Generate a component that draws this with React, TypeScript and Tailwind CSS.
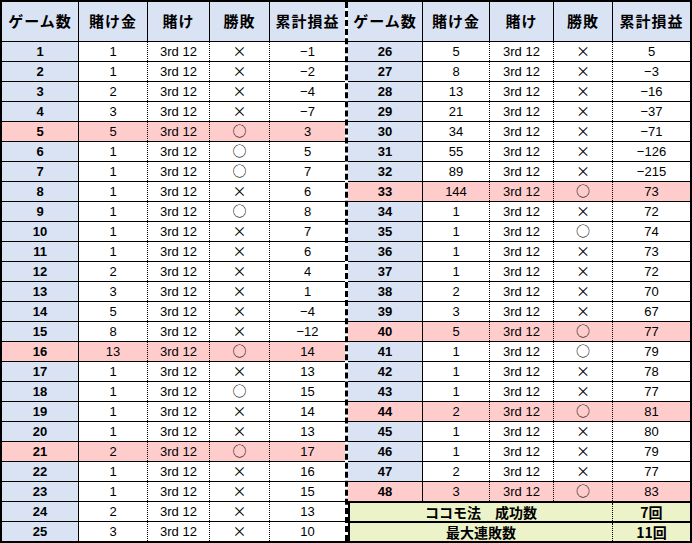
import React from "react";

type Row = [number, number, boolean, string];

const left: Row[] = [
  [1, 1, false, "−1"],
  [2, 1, false, "−2"],
  [3, 2, false, "−4"],
  [4, 3, false, "−7"],
  [5, 5, true, "3"],
  [6, 1, true, "5"],
  [7, 1, true, "7"],
  [8, 1, false, "6"],
  [9, 1, true, "8"],
  [10, 1, false, "7"],
  [11, 1, false, "6"],
  [12, 2, false, "4"],
  [13, 3, false, "1"],
  [14, 5, false, "−4"],
  [15, 8, false, "−12"],
  [16, 13, true, "14"],
  [17, 1, false, "13"],
  [18, 1, true, "15"],
  [19, 1, false, "14"],
  [20, 1, false, "13"],
  [21, 2, true, "17"],
  [22, 1, false, "16"],
  [23, 1, false, "15"],
  [24, 2, false, "13"],
  [25, 3, false, "10"],
];

const right: Row[] = [
  [26, 5, false, "5"],
  [27, 8, false, "−3"],
  [28, 13, false, "−16"],
  [29, 21, false, "−37"],
  [30, 34, false, "−71"],
  [31, 55, false, "−126"],
  [32, 89, false, "−215"],
  [33, 144, true, "73"],
  [34, 1, false, "72"],
  [35, 1, true, "74"],
  [36, 1, false, "73"],
  [37, 1, false, "72"],
  [38, 2, false, "70"],
  [39, 3, false, "67"],
  [40, 5, true, "77"],
  [41, 1, true, "79"],
  [42, 1, false, "78"],
  [43, 1, false, "77"],
  [44, 2, true, "81"],
  [45, 1, false, "80"],
  [46, 1, false, "79"],
  [47, 2, false, "77"],
  [48, 3, true, "83"],
];

const pinkLeft = new Set([5, 16, 21]);
const pinkRight = new Set([33, 40, 44, 48]);

const headers = ["ゲーム数", "賭け金", "賭け", "勝敗", "累計損益"];

const JP = "font-[family-name:'Noto_Sans_CJK_JP','Liberation_Sans',sans-serif]";
const LAT = "font-[family-name:'Liberation_Sans','Noto_Sans_CJK_JP',sans-serif]";

function Header({ widths }: { widths: string[] }) {
  return (
    <div className="flex h-[39px] shrink-0 bg-[#dae3f3]">
      {headers.map((h, i) => (
        <div
          key={h}
          className={`${widths[i]} ${JP} flex items-center justify-center text-[15px] font-bold tracking-[1px] text-black ${
            i < 4 ? "border-r border-black" : ""
          }`}
        >
          {h}
        </div>
      ))}
    </div>
  );
}

function DataRow({ r, widths, pink }: { r: Row; widths: string[]; pink: boolean }) {
  const [n, bet, win, total] = r;
  return (
    <div
      className={`flex h-[20px] shrink-0 border-t border-black text-[13px] leading-none ${
        pink ? "bg-[#ffcccc]" : "bg-white"
      }`}
    >
      <div
        className={`${widths[0]} flex items-center justify-center border-r border-black font-bold ${
          pink ? "bg-[#ffcccc]" : "bg-[#dae3f3]"
        }`}
      >
        {n}
      </div>
      <div className={`${widths[1]} flex items-center justify-center border-r border-dotted border-black`}>
        {bet}
      </div>
      <div className={`${widths[2]} flex items-center justify-center border-r border-dotted border-black`}>
        3rd 12
      </div>
      <div
        className={`${widths[3]} ${JP} flex items-center justify-center border-r border-dotted border-black text-[14px]`}
      >
        <span className="-translate-y-[2px]">{win ? "○" : "×"}</span>
      </div>
      <div className={`${widths[4]} flex items-center justify-center`}>{total}</div>
    </div>
  );
}

function SummaryRow({ label, value }: { label: string; value: string }) {
  return (
    <div className="flex h-[18px] shrink-0">
      <div
        className={`w-[263px] ${JP} flex items-center justify-center border-r border-dotted border-black text-[14px] font-bold leading-none`}
      >
        {label}
      </div>
      <div className={`flex-1 ${JP} flex items-center justify-center text-[14px] font-bold leading-none`}>
        {value}
      </div>
    </div>
  );
}

export default function App() {
  const lw = ["w-[77px]", "w-[69px]", "w-[62px]", "w-[60px]", "w-[75px]"];
  const rw = ["w-[75px]", "w-[67px]", "w-[64px]", "w-[59px]", "w-[77px]"];
  return (
    <div className={`w-[692px] h-[543px] bg-white text-black ${LAT}`}>
      <div className="flex w-[692px] h-[543px] border-2 border-black overflow-hidden">
        <div className="flex flex-col w-[343px] shrink-0">
          <Header widths={lw} />
          {left.map((r) => (
            <DataRow key={r[0]} r={r} widths={lw} pink={pinkLeft.has(r[0])} />
          ))}
        </div>
        <div className="flex flex-col w-[345px] shrink-0 border-l-[3px] border-dashed border-black">
          <Header widths={rw} />
          {right.map((r) => (
            <DataRow key={r[0]} r={r} widths={rw} pink={pinkRight.has(r[0])} />
          ))}
          <div className="flex flex-col flex-1 min-h-0 border-t-2 border-l-2 border-black bg-[#ecf3c9]">
            <SummaryRow label="ココモ法　成功数" value="7回" />
            <div className="h-[2px] shrink-0 bg-black" />
            <SummaryRow label="最大連敗数" value="11回" />
          </div>
        </div>
      </div>
    </div>
  );
}
